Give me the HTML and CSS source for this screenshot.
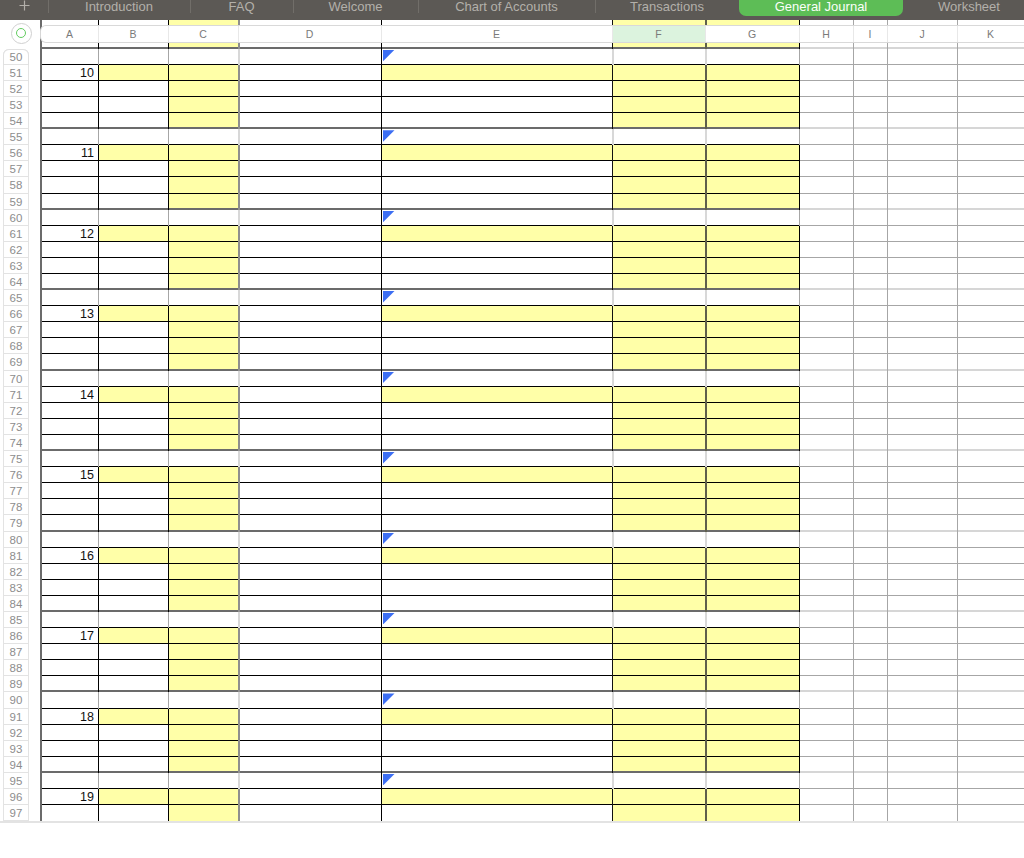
FILE: index.html
```html
<!DOCTYPE html>
<html lang="en">
<head>
<meta charset="utf-8">
<title>General Journal</title>
<link rel="stylesheet" href="styles.css">
</head>
<body>
<div class="tabs">
  <div class="tab plus"><svg width="11" height="11" viewBox="0 0 11 11"><path d="M5.5 0.5V10.5M0.5 5.5H10.5" stroke="#b3b0aa" stroke-width="1.2" fill="none"/></svg></div>
  <div class="tab sep-l w-intro">Introduction</div>
  <div class="tab sep-l w-faq">FAQ</div>
  <div class="tab sep-l w-welcome">Welcome</div>
  <div class="tab sep-l w-chart">Chart of Accounts</div>
  <div class="tab sep-l w-trans">Transactions</div>
  <div class="tab active w-gj">General Journal</div>
  <div class="tab w-ws">Worksheet</div>
</div>

<div class="g box bl hdr">
  <div class="corner"><span class="ring"><span class="dot"></span></span></div>
  <div class="hc"><span class="lbl first">A</span></div>
  <div class="hc"><span class="lbl">B</span></div>
  <div class="hc"><span class="lbl">C</span></div>
  <div class="hc"><span class="lbl">D</span></div>
  <div class="hc"><span class="lbl">E</span></div>
  <div class="hc"><span class="lbl">F</span></div>
  <div class="hc"><span class="lbl">G</span></div>
  <div class="hc"><span class="lbl">H</span></div>
  <div class="hc"><span class="lbl">I</span></div>
  <div class="hc"><span class="lbl">J</span></div>
  <div class="hc"><span class="lbl">K</span></div>
</div>

<div class="rows">
<div class="g sep"><span class="rn first">50</span><span></span><span></span><span></span><span></span><span><b class="tri"></b></span><span></span><span></span><span></span><span></span><span></span><span></span></div>
<div class="g box b1"><span class="rn">51</span><span class="num">10</span><span></span><span></span><span></span><span></span><span></span><span></span><span></span><span></span><span></span><span></span></div>
<div class="g box"><span class="rn">52</span><span></span><span></span><span></span><span></span><span></span><span></span><span></span><span></span><span></span><span></span><span></span></div>
<div class="g box"><span class="rn">53</span><span></span><span></span><span></span><span></span><span></span><span></span><span></span><span></span><span></span><span></span><span></span></div>
<div class="g box bl"><span class="rn">54</span><span></span><span></span><span></span><span></span><span></span><span></span><span></span><span></span><span></span><span></span><span></span></div>
<div class="g sep"><span class="rn">55</span><span></span><span></span><span></span><span></span><span><b class="tri"></b></span><span></span><span></span><span></span><span></span><span></span><span></span></div>
<div class="g box b1"><span class="rn">56</span><span class="num">11</span><span></span><span></span><span></span><span></span><span></span><span></span><span></span><span></span><span></span><span></span></div>
<div class="g box"><span class="rn">57</span><span></span><span></span><span></span><span></span><span></span><span></span><span></span><span></span><span></span><span></span><span></span></div>
<div class="g box"><span class="rn">58</span><span></span><span></span><span></span><span></span><span></span><span></span><span></span><span></span><span></span><span></span><span></span></div>
<div class="g box bl"><span class="rn">59</span><span></span><span></span><span></span><span></span><span></span><span></span><span></span><span></span><span></span><span></span><span></span></div>
<div class="g sep"><span class="rn">60</span><span></span><span></span><span></span><span></span><span><b class="tri"></b></span><span></span><span></span><span></span><span></span><span></span><span></span></div>
<div class="g box b1"><span class="rn">61</span><span class="num">12</span><span></span><span></span><span></span><span></span><span></span><span></span><span></span><span></span><span></span><span></span></div>
<div class="g box"><span class="rn">62</span><span></span><span></span><span></span><span></span><span></span><span></span><span></span><span></span><span></span><span></span><span></span></div>
<div class="g box"><span class="rn">63</span><span></span><span></span><span></span><span></span><span></span><span></span><span></span><span></span><span></span><span></span><span></span></div>
<div class="g box bl"><span class="rn">64</span><span></span><span></span><span></span><span></span><span></span><span></span><span></span><span></span><span></span><span></span><span></span></div>
<div class="g sep"><span class="rn">65</span><span></span><span></span><span></span><span></span><span><b class="tri"></b></span><span></span><span></span><span></span><span></span><span></span><span></span></div>
<div class="g box b1"><span class="rn">66</span><span class="num">13</span><span></span><span></span><span></span><span></span><span></span><span></span><span></span><span></span><span></span><span></span></div>
<div class="g box"><span class="rn">67</span><span></span><span></span><span></span><span></span><span></span><span></span><span></span><span></span><span></span><span></span><span></span></div>
<div class="g box"><span class="rn">68</span><span></span><span></span><span></span><span></span><span></span><span></span><span></span><span></span><span></span><span></span><span></span></div>
<div class="g box bl"><span class="rn">69</span><span></span><span></span><span></span><span></span><span></span><span></span><span></span><span></span><span></span><span></span><span></span></div>
<div class="g sep"><span class="rn">70</span><span></span><span></span><span></span><span></span><span><b class="tri"></b></span><span></span><span></span><span></span><span></span><span></span><span></span></div>
<div class="g box b1"><span class="rn">71</span><span class="num">14</span><span></span><span></span><span></span><span></span><span></span><span></span><span></span><span></span><span></span><span></span></div>
<div class="g box"><span class="rn">72</span><span></span><span></span><span></span><span></span><span></span><span></span><span></span><span></span><span></span><span></span><span></span></div>
<div class="g box"><span class="rn">73</span><span></span><span></span><span></span><span></span><span></span><span></span><span></span><span></span><span></span><span></span><span></span></div>
<div class="g box bl"><span class="rn">74</span><span></span><span></span><span></span><span></span><span></span><span></span><span></span><span></span><span></span><span></span><span></span></div>
<div class="g sep"><span class="rn">75</span><span></span><span></span><span></span><span></span><span><b class="tri"></b></span><span></span><span></span><span></span><span></span><span></span><span></span></div>
<div class="g box b1"><span class="rn">76</span><span class="num">15</span><span></span><span></span><span></span><span></span><span></span><span></span><span></span><span></span><span></span><span></span></div>
<div class="g box"><span class="rn">77</span><span></span><span></span><span></span><span></span><span></span><span></span><span></span><span></span><span></span><span></span><span></span></div>
<div class="g box"><span class="rn">78</span><span></span><span></span><span></span><span></span><span></span><span></span><span></span><span></span><span></span><span></span><span></span></div>
<div class="g box bl"><span class="rn">79</span><span></span><span></span><span></span><span></span><span></span><span></span><span></span><span></span><span></span><span></span><span></span></div>
<div class="g sep"><span class="rn">80</span><span></span><span></span><span></span><span></span><span><b class="tri"></b></span><span></span><span></span><span></span><span></span><span></span><span></span></div>
<div class="g box b1"><span class="rn">81</span><span class="num">16</span><span></span><span></span><span></span><span></span><span></span><span></span><span></span><span></span><span></span><span></span></div>
<div class="g box"><span class="rn">82</span><span></span><span></span><span></span><span></span><span></span><span></span><span></span><span></span><span></span><span></span><span></span></div>
<div class="g box"><span class="rn">83</span><span></span><span></span><span></span><span></span><span></span><span></span><span></span><span></span><span></span><span></span><span></span></div>
<div class="g box bl"><span class="rn">84</span><span></span><span></span><span></span><span></span><span></span><span></span><span></span><span></span><span></span><span></span><span></span></div>
<div class="g sep"><span class="rn">85</span><span></span><span></span><span></span><span></span><span><b class="tri"></b></span><span></span><span></span><span></span><span></span><span></span><span></span></div>
<div class="g box b1"><span class="rn">86</span><span class="num">17</span><span></span><span></span><span></span><span></span><span></span><span></span><span></span><span></span><span></span><span></span></div>
<div class="g box"><span class="rn">87</span><span></span><span></span><span></span><span></span><span></span><span></span><span></span><span></span><span></span><span></span><span></span></div>
<div class="g box"><span class="rn">88</span><span></span><span></span><span></span><span></span><span></span><span></span><span></span><span></span><span></span><span></span><span></span></div>
<div class="g box bl"><span class="rn">89</span><span></span><span></span><span></span><span></span><span></span><span></span><span></span><span></span><span></span><span></span><span></span></div>
<div class="g sep"><span class="rn">90</span><span></span><span></span><span></span><span></span><span><b class="tri"></b></span><span></span><span></span><span></span><span></span><span></span><span></span></div>
<div class="g box b1"><span class="rn">91</span><span class="num">18</span><span></span><span></span><span></span><span></span><span></span><span></span><span></span><span></span><span></span><span></span></div>
<div class="g box"><span class="rn">92</span><span></span><span></span><span></span><span></span><span></span><span></span><span></span><span></span><span></span><span></span><span></span></div>
<div class="g box"><span class="rn">93</span><span></span><span></span><span></span><span></span><span></span><span></span><span></span><span></span><span></span><span></span><span></span></div>
<div class="g box bl"><span class="rn">94</span><span></span><span></span><span></span><span></span><span></span><span></span><span></span><span></span><span></span><span></span><span></span></div>
<div class="g sep"><span class="rn">95</span><span></span><span></span><span></span><span></span><span><b class="tri"></b></span><span></span><span></span><span></span><span></span><span></span><span></span></div>
<div class="g box b1"><span class="rn">96</span><span class="num">19</span><span></span><span></span><span></span><span></span><span></span><span></span><span></span><span></span><span></span><span></span></div>
<div class="g box end"><span class="rn">97</span><span></span><span></span><span></span><span></span><span></span><span></span><span></span><span></span><span></span><span></span><span></span></div>
</div>
</body>
</html>
```
FILE: styles.css
```css
* { box-sizing: border-box; margin: 0; padding: 0; }
:root {
  --cols: 40px 58px 70px 70px 143px 231px 93px 94px 54px 34px 70px 67px;
  --yellow: #ffffa8;
}
body {
  margin: 0;
  width: 1024px;
  height: 858px;
  overflow: hidden;
  background: #fff;
  font-family: "Liberation Sans", Arial, sans-serif;
}

/* ---------- tab bar ---------- */
.tabs {
  display: flex;
  height: 20px;
  background: #5c5955;
  overflow: hidden;
  white-space: nowrap;
}
.tab {
  flex: none;
  text-align: center;
  font-size: 13px;
  line-height: 14px;
  color: #b3b0aa;
}
.tab.sep-l {
  background: linear-gradient(#716e69, #716e69) left top / 1px 13px no-repeat;
}
.tab.plus { width: 48px; display: flex; justify-content: center; padding-left: 1px; }
.w-intro { width: 142px; }
.w-faq { width: 103px; }
.w-welcome { width: 125px; }
.w-chart { width: 177px; }
.w-trans { width: 144px; }
.w-gj { width: 164px; }
.w-ws { width: 132px; }
.tab.active {
  height: 16px;
  background: #5dbd56;
  color: #fbfffa;
  border-radius: 0 0 7px 7px;
}

/* ---------- grid rows ---------- */
.g {
  display: grid;
  grid-template-columns: var(--cols);
  --bw: 1px;
  --bc: #000;
}
.rows .g { height: 16.1px; }
.rows { border-bottom: 2px solid #e3e3e3; }

.g > :nth-child(n+2) {
  --lw: 1px;
  --lc: #a6a6a6;
  box-shadow: inset var(--lw) 0 0 var(--lc), inset 0 calc(-1 * var(--bw)) 0 var(--bc);
}
.g > :nth-child(n+9) { --bw: 1px; --bc: #a6a6a6; }
.bl { --bw: 2px; --bc: #6b6b6b; }
.bl > :nth-child(n+9) { --bw: 2px; --bc: #d6d6d6; }
.g.end > :nth-child(n) { --bw: 0px; }

/* column left lines */
.g > :nth-child(2) { --lw: 2px; --lc: #6b6b6b; }
.box > :nth-child(3),
.box > :nth-child(4) { --lc: #000; }
.g > :nth-child(5) { --lw: 2px; --lc: #d8d8d8; }
.box > :nth-child(5) { --lc: #8e8e8e; }
.g > :nth-child(6) { --lc: #000; }
.g > :nth-child(7),
.g > :nth-child(8) { --lw: 2px; --lc: #d8d8d8; }
.box > :nth-child(7) { --lw: 1px; --lc: #111; }
.box > :nth-child(8) { --lc: #5f5f4c; }
.box > :nth-child(9) { --lc: #000; }

/* fills */
.box > :nth-child(4),
.box > :nth-child(7),
.box > :nth-child(8) { background: var(--yellow); }
.b1 > :nth-child(3),
.b1 > :nth-child(6) { background: var(--yellow); }

/* cell content */
.num {
  text-align: right;
  padding: 1px 4px 0 0;
  font-size: 12.5px;
  line-height: 15px;
  color: #111;
}
.tri {
  display: block;
  width: 11.5px;
  height: 11.5px;
  margin: 1px 0 0 2px;
  background: #3c6ef3;
  clip-path: polygon(0 0, 100% 0, 0 100%);
}

/* row headers */
.rn {
  width: 26px;
  margin-left: 3px;
  font-size: 11.5px;
  line-height: 16px;
  text-align: center;
  color: #8d8d8d;
  box-shadow: inset 1px 0 0 #e3e3e3, inset -1px 0 0 #e3e3e3, inset 0 -1px 0 #e3e3e3;
}
.rn.first {
  border-radius: 6px 6px 0 0;
  box-shadow: inset 1px 0 0 #e0e0e0, inset -1px 0 0 #e0e0e0, inset 0 -1px 0 #e3e3e3, inset 0 1px 0 #e0e0e0;
}

/* ---------- column header strip ---------- */
.hdr { height: 28.7px; }
.corner { padding: 2.5px 0 0 10.5px; }
.ring {
  display: flex;
  align-items: center;
  justify-content: center;
  width: 21px;
  height: 21px;
  border: 1px solid #d0d0d0;
  border-radius: 50%;
  background: #fff;
}
.dot {
  width: 10.5px;
  height: 10.5px;
  border: 1.4px solid #63cd60;
  border-radius: 50%;
}
.hc { padding: 4.7px 0 6px; }
.lbl {
  display: block;
  height: 18px;
  background: #fff;
  border-top: 1px solid #d9d9d9;
  border-bottom: 1px solid #d9d9d9;
  box-shadow: inset 1px 0 0 #e8e8e8;
  font-size: 10.5px;
  line-height: 16px;
  text-align: center;
  color: #7a7a7a;
}
.lbl.first {
  border-left: 1px solid #d6d6d6;
  border-radius: 6px 0 0 6px;
  box-shadow: none;
}
.hdr > :nth-child(7) .lbl { background: #dcf3de; }
```
